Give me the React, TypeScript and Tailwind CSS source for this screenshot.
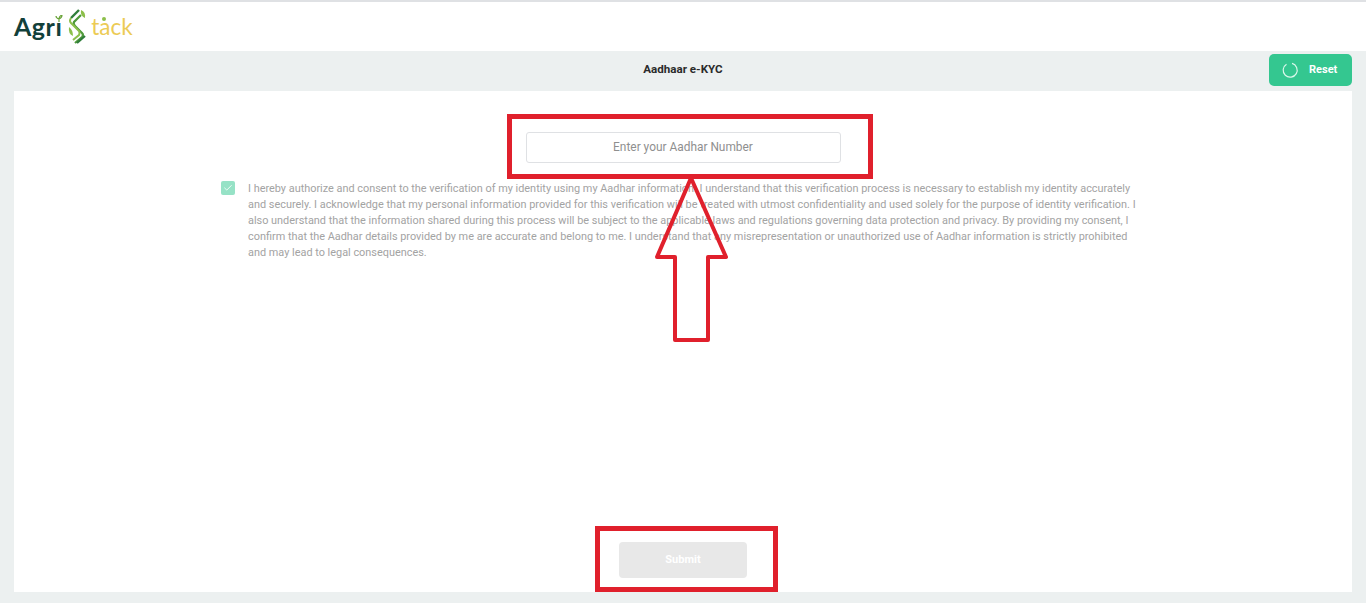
import { Check } from "lucide-react";

function Logo() {
  return (
    <div className="flex items-center h-[49px] pl-[14px]">
      <span className="relative font-['Lato',sans-serif] font-bold text-[25px] leading-none text-[#12403a] tracking-[0.5px]">
        Agri
        <svg width="8" height="7" viewBox="0 0 8 7" className="absolute right-[-1px] top-[1px]" fill="none">
          <rect width="8" height="7" fill="#ffffff" />
          <path d="M4 7 L4 4 Q4 1 7 0 Q7 3 4 4 Q1 3 1 1" stroke="#6aa43a" strokeWidth="1.2" />
        </svg>
      </span>
      <svg width="20" height="35" viewBox="0 0 20 35" className="ml-[6px] mr-[3px]" fill="none">
        <path d="M11 1 L3 9" stroke="#2f7d3a" strokeWidth="2.4" />
        <path d="M13 6 L6 13 Q5 15 7 17 L14 24 Q16 26 14 28 L7 34" stroke="#4f9a3c" strokeWidth="2.2" />
        <path d="M3 9 Q1 12 3 14 L11 22 Q12 24 11 26 L5 31" stroke="#8cbf4a" strokeWidth="2" />
        <path d="M13 1 Q18 3 17 9 Q12 7 13 1 Z" fill="#8cbf4a" />
        <path d="M1 18 Q5 21 5 27 Q0 25 1 18 Z" fill="#8cbf4a" />
        <path d="M17 27 L9 34" stroke="#2f7d3a" strokeWidth="2.2" />
      </svg>
      <span className="relative font-['Lato',sans-serif] text-[22.5px] leading-none text-[#eccb55] translate-y-[1px]">
        tack
        <span className="absolute left-[11px] top-[1px] w-[4px] h-[4px] rounded-full bg-[#8cbf4a]" />
      </span>
    </div>
  );
}

function Arrow() {
  return (
    <svg className="absolute left-[650px] top-[172px]" width="82" height="174" viewBox="0 0 82 174" fill="none">
      <path d="M41 6 L76 85 L58 85 L58 168 L25 168 L25 85 L7 85 Z" stroke="#e0202c" strokeWidth="4" strokeLinejoin="round" />
    </svg>
  );
}

export default function App() {
  return (
    <div className="relative h-[603px] overflow-hidden bg-[#ecf0f0] font-['Roboto',sans-serif]">
      <div className="bg-white h-[51px] border-t-2 border-[#dfe1e4]">
        <Logo />
      </div>

      <div className="relative flex items-center justify-center h-[40px] pl-[14px] pr-[14px]">
        <h1 className="text-[11.6px] font-bold text-[#2b2b2b] -translate-y-[1px]">Aadhaar e-KYC</h1>
        <button className="absolute right-[14px] top-[3px] flex items-center h-[32px] w-[83px] rounded-[5px] bg-[#34c790] pl-[12px] text-white text-[11px] font-bold">
          <svg width="18" height="18" viewBox="0 0 18 18" fill="none" className="mr-[10px]">
            <path d="M5.5 3.2 A7 7 0 1 0 11 2.4" stroke="#d9f7ea" strokeWidth="1.2" />
          </svg>
          Reset
        </button>
      </div>

      <main className="mx-[14px] h-[501px] bg-white flex flex-col items-center">
        <input
          readOnly
          placeholder="Enter your Aadhar Number"
          className="mt-[41px] w-[315px] h-[31px] pb-[2px] rounded-[3px] border border-[#dfe1e4] text-center text-[11.9px] outline-none placeholder:text-[#8f8f8f]"
        />
        <div className="flex self-start mt-[18px] ml-[207px]">
          <div className="flex items-center justify-center w-[14px] h-[14px] rounded-[2px] bg-[#96e2c6]">
            <Check size={10} color="#ffffff" strokeWidth={2} />
          </div>
          <p className="ml-[13px] w-[892px] text-[10.9px] leading-[16px] text-[#a3a3a3]">
            I hereby authorize and consent to the verification of my identity using my Aadhar information. I understand that this verification process is necessary to establish my identity accurately and securely. I acknowledge that my personal information provided for this verification will be treated with utmost confidentiality and used solely for the purpose of identity verification. I also understand that the information shared during this process will be subject to the applicable laws and regulations governing data protection and privacy. By providing my consent, I confirm that the Aadhar details provided by me are accurate and belong to me. I understand that any misrepresentation or unauthorized use of Aadhar information is strictly prohibited and may lead to legal consequences.
          </p>
        </div>
        <button className="mt-auto mb-[14px] w-[128px] h-[36px] rounded-[4px] bg-[#e8e8e8] text-white text-[11px] font-bold">Submit</button>
      </main>

      {/* red annotations drawn over the screenshot */}
      <div className="absolute left-[507px] top-[114px] w-[366px] h-[65px] border-[5px] border-[#e0202c]" />
      <div className="absolute left-[595px] top-[526px] w-[183px] h-[66px] border-[5px] border-[#e0202c]" />
      <Arrow />
    </div>
  );
}
